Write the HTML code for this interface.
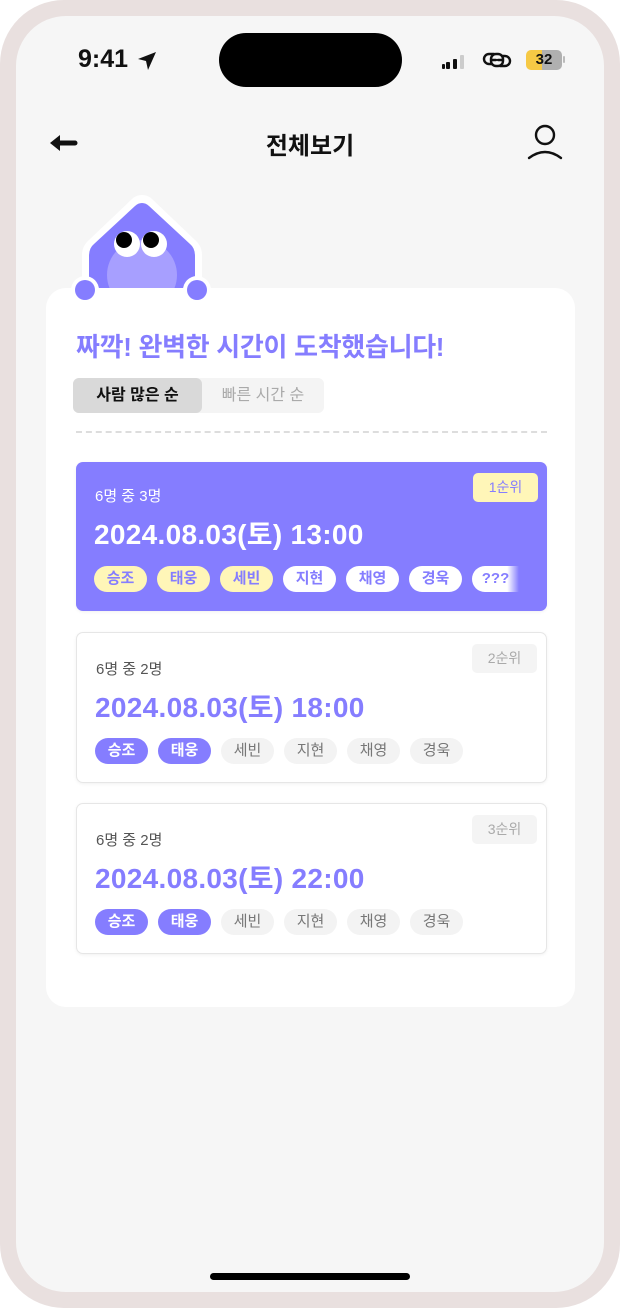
<!DOCTYPE html>
<html><head><meta charset="utf-8"><style>
*{margin:0;padding:0;box-sizing:border-box}
body{width:620px;height:1308px;background:#fff;font-family:"Liberation Sans","Noto Sans CJK KR",sans-serif;position:relative;overflow:hidden}
.frame{position:absolute;left:0;top:0;width:620px;height:1308px;background:#e9e0df;border-radius:64px}
.screen{position:absolute;left:16px;top:16px;width:588px;height:1276px;background:#f6f6f6;border-radius:50px;overflow:hidden}
.abs{position:absolute}
.card{position:absolute;left:46px;top:288px;width:529px;height:719px;background:#fff;border-radius:20px}
.item{position:absolute;left:76px;width:471px;border-radius:7px;background:#fff;border:1.5px solid #e6e6e6;box-shadow:0 1px 3px rgba(0,0,0,.06)}
.item.p{background:#857dff;border:none}
.cnt{position:absolute;left:19px;font-size:15px;color:#555}
.date{position:absolute;left:18px;font-size:28px;font-weight:bold;color:#857dff;letter-spacing:0.3px}
.badge{position:absolute;right:9px;top:11px;width:65px;height:29px;border-radius:5px;background:#f4f4f4;color:#aaa;font-size:14px;text-align:center;line-height:29px}
.chips{position:absolute;left:18px;display:flex;gap:10px}
.chip{width:53px;height:26px;border-radius:13px;font-size:15px;text-align:center;line-height:26px;background:#f3f3f3;color:#777}
.chip.on{background:#857dff;color:#fff;font-weight:bold}
.chip.y{background:#fff6b8;color:#857dff;font-weight:bold}
.chip.w{background:#fff;color:#857dff;font-weight:bold}
</style></head><body>
<div class="frame"></div>
<div class="screen"></div>
<div class="abs" style="left:78px;top:45px;font-size:25px;font-weight:bold;color:#111">9:41</div>
<svg class="abs" style="left:136px;top:50px" width="22" height="22" viewBox="0 0 22 22"><path d="M20 2 L2 9 L10 11 L12 20 Z" fill="#111"/></svg>
<div class="abs" style="left:219px;top:33px;width:183px;height:54px;background:#000;border-radius:27px"></div>
<svg class="abs" style="left:440px;top:50px" width="30" height="20"><rect x="6" y="12" width="4" height="7" rx="1" fill="#111"/><rect x="13" y="9" width="4" height="10" rx="1" fill="#111"/><rect x="20" y="5" width="4" height="14" rx="1" fill="#ccc"/><rect x="2" y="14" width="3" height="5" rx="1" fill="#111"/></svg>
<svg class="abs" style="left:482px;top:49px" width="30" height="22" viewBox="0 0 30 22"><path d="M12 5 H7 a5 5 0 0 0 0 10 H10 M14 11 H9 M18 17 h5 a5 5 0 0 0 0-10 H20 M16 11 h5" fill="none" stroke="#111" stroke-width="2.4" stroke-linecap="round"/><rect x="9" y="5" width="12" height="12" rx="5" fill="none" stroke="#111" stroke-width="2.4"/></svg>
<div class="abs" style="left:526px;top:50px;width:36px;height:20px;border-radius:5px;background:linear-gradient(90deg,#f6c945 0 45%,#b0b0b0 45%);font-size:15px;font-weight:bold;text-align:center;line-height:20px;color:#111">32</div>
<div class="abs" style="left:563px;top:56px;width:2px;height:7px;background:#bbb;border-radius:1px"></div>
<svg class="abs" style="left:48px;top:132px" width="30" height="22" viewBox="0 0 30 22"><path d="M27 11 H10" stroke="#111" stroke-width="5" stroke-linecap="round"/><path d="M2 11 L12 3 V19 Z" fill="#111"/></svg>
<div class="abs" style="left:0;width:620px;top:126px;text-align:center;font-size:24px;font-weight:bold;color:#111">전체보기</div>
<svg class="abs" style="left:524px;top:122px" width="42" height="40" viewBox="0 0 42 40"><circle cx="21" cy="13" r="9" fill="none" stroke="#111" stroke-width="2.4"/><path d="M5 36 Q21 24 37 36" fill="none" stroke="#111" stroke-width="2.4" stroke-linecap="round"/></svg>
<svg class="abs" style="left:60px;top:180px" width="160" height="130" viewBox="60 180 160 130">
<path d="M142 195 Q148 195 152 199 L195 240 Q202 246 202 255 V295 H82 V255 Q82 246 89 240 L132 199 Q136 195 142 195 Z" fill="#fff"/>
<path d="M142 203 Q146 203 149 206 L190 244 Q195 248 195 256 V295 H89 V256 Q89 248 94 244 L135 206 Q138 203 142 203 Z" fill="#857dff"/>
<circle cx="142" cy="275" r="35" fill="#a79fff"/>
<circle cx="127" cy="244" r="13" fill="#fff"/><circle cx="154" cy="244" r="13" fill="#fff"/>
<circle cx="124" cy="240" r="8" fill="#000"/><circle cx="151" cy="240" r="8" fill="#000"/>
<circle cx="85" cy="290" r="14" fill="#fff"/><circle cx="197" cy="290" r="14" fill="#fff"/>
</svg>
<div class="card"></div>
<svg class="abs" style="left:70px;top:275px" width="140" height="30"><circle cx="15" cy="15" r="10" fill="#857dff"/><circle cx="127" cy="15" r="10" fill="#857dff"/></svg>
<div class="abs" style="left:76px;top:327px;font-size:26px;font-weight:bold;color:#857dff;letter-spacing:-0.3px">짜깍! 완벽한 시간이 도착했습니다!</div>
<div class="abs" style="left:73px;top:378px;width:251px;height:35px;background:#f4f4f4;border-radius:6px"></div>
<div class="abs" style="left:73px;top:378px;width:129px;height:35px;background:#d9d9d9;border-radius:6px;text-align:center;line-height:35px;font-size:16px;font-weight:bold;color:#111">사람 많은 순</div>
<div class="abs" style="left:202px;top:378px;width:122px;height:35px;text-align:center;line-height:35px;font-size:16px;color:#aaa">빠른 시간 순</div>
<div class="abs" style="left:76px;top:431px;width:471px;border-top:2px dashed #ddd"></div>

<div class="item p" style="top:462px;height:149px">
<div class="cnt" style="top:23px;color:#fff">6명 중 3명</div>
<div class="badge" style="background:#fff6b8;color:#857dff">1순위</div>
<div class="date" style="top:51px;color:#fff">2024.08.03(토) 13:00</div>
<div class="chips" style="top:104px"><div class="chip y">승조</div><div class="chip y">태웅</div><div class="chip y">세빈</div><div class="chip w">지현</div><div class="chip w">채영</div><div class="chip w">경욱</div><div class="chip w" style="width:47px;border-radius:13px 0 0 13px;background:linear-gradient(90deg,#fff 75%,#857dff)">???</div></div>
</div>
<div class="item" style="top:632px;height:151px">
<div class="cnt" style="top:25px">6명 중 2명</div>
<div class="badge">2순위</div>
<div class="date" style="top:53px">2024.08.03(토) 18:00</div>
<div class="chips" style="top:105px"><div class="chip on">승조</div><div class="chip on">태웅</div><div class="chip">세빈</div><div class="chip">지현</div><div class="chip">채영</div><div class="chip">경욱</div></div>
</div>
<div class="item" style="top:803px;height:151px">
<div class="cnt" style="top:25px">6명 중 2명</div>
<div class="badge">3순위</div>
<div class="date" style="top:53px">2024.08.03(토) 22:00</div>
<div class="chips" style="top:105px"><div class="chip on">승조</div><div class="chip on">태웅</div><div class="chip">세빈</div><div class="chip">지현</div><div class="chip">채영</div><div class="chip">경욱</div></div>
</div>
<div class="abs" style="left:210px;top:1273px;width:200px;height:7px;background:#000;border-radius:4px"></div>
</body></html>
